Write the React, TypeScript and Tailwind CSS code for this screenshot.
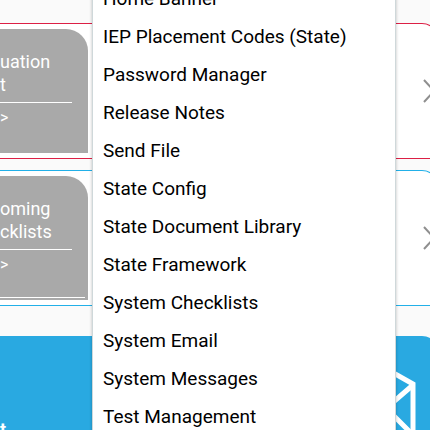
import React from 'react';
import { clsx } from 'clsx';

interface SummaryCardProps {
  lines: string[];
  tone: 'red' | 'blue';
  underlined?: boolean;
}

const menuItems = [
  'Home Banner',
  'IEP Placement Codes (State)',
  'Password Manager',
  'Release Notes',
  'Send File',
  'State Config',
  'State Document Library',
  'State Framework',
  'System Checklists',
  'System Email',
  'System Messages',
  'Test Management',
];

const toneBorders = {
  red: 'border-[#dc1f45]',
  blue: 'border-[#22b0e8]',
} as const;

function SummaryCard({ lines, tone, underlined }: SummaryCardProps) {
  return (
    <section
      className={clsx(
        'flex h-[136px] items-start justify-between rounded-tr-2xl border-y border-r bg-white pt-[5px]',
        toneBorders[tone]
      )}
    >
      <div className="flex h-[124px] w-[88px] flex-col rounded-tr-[22px] bg-[#a9a9a9] pt-[21px] text-white">
        <h2 className="text-[18px] leading-[23px]">
          {lines.map((line) => (
            <span key={line} className="block">
              {line}
            </span>
          ))}
        </h2>
        <hr className="mt-[6px] w-[72px] border-white" />
        <a href="#" className="mt-[3px] text-base leading-6">
          &gt;
        </a>
        {underlined && <hr className="mt-auto mb-[2px] w-[85px] border-white" />}
      </div>
      <button aria-label="Next" className="mt-[50px] mr-0.5 text-[#8f8f8f]">
        <svg className="h-6 w-3" viewBox="0 0 12 24" fill="none" stroke="currentColor" strokeWidth="2">
          <path d="M1 1 11 12 1 23" />
        </svg>
      </button>
    </section>
  );
}

function EnvelopeIcon() {
  return (
    <svg className="h-20 w-20" viewBox="0 0 80 80" fill="none" stroke="white" strokeWidth="5">
      <path d="M3 80V26L40 5l37 21v54" />
      <path d="M3 27l37 32 37-32M0 80l32-32M80 80 48 48" />
    </svg>
  );
}

export default function App() {
  return (
    <div className="relative h-screen overflow-hidden bg-[#fafafa] font-['Roboto',sans-serif]">
      <main className="-mr-2 flex flex-col pt-[23px]">
        <SummaryCard lines={['uation', 't']} tone="red" />
        <div className="mt-[11px]">
          <SummaryCard lines={['oming', 'cklists']} tone="blue" underlined />
        </div>
        <section className="mt-[30px] flex h-40 items-start justify-between rounded-tr-2xl bg-[#29a9e1] pt-[22px] pr-[22px] text-white">
          <h2 className="mt-[60px] text-[18px] leading-6 font-bold">t</h2>
          <EnvelopeIcon />
        </section>
      </main>

      <nav className="absolute -top-[20px] right-[34px] left-[92px] border-x border-[#cfd8da] bg-white shadow-[0_0_3px_rgba(0,0,0,0.25)]">
        <ul>
          {menuItems.map((item) => (
            <li key={item}>
              <a href="#" className="block px-[10px] text-[19px] leading-[38px] whitespace-nowrap text-black">
                {item}
              </a>
            </li>
          ))}
        </ul>
      </nav>
    </div>
  );
}
